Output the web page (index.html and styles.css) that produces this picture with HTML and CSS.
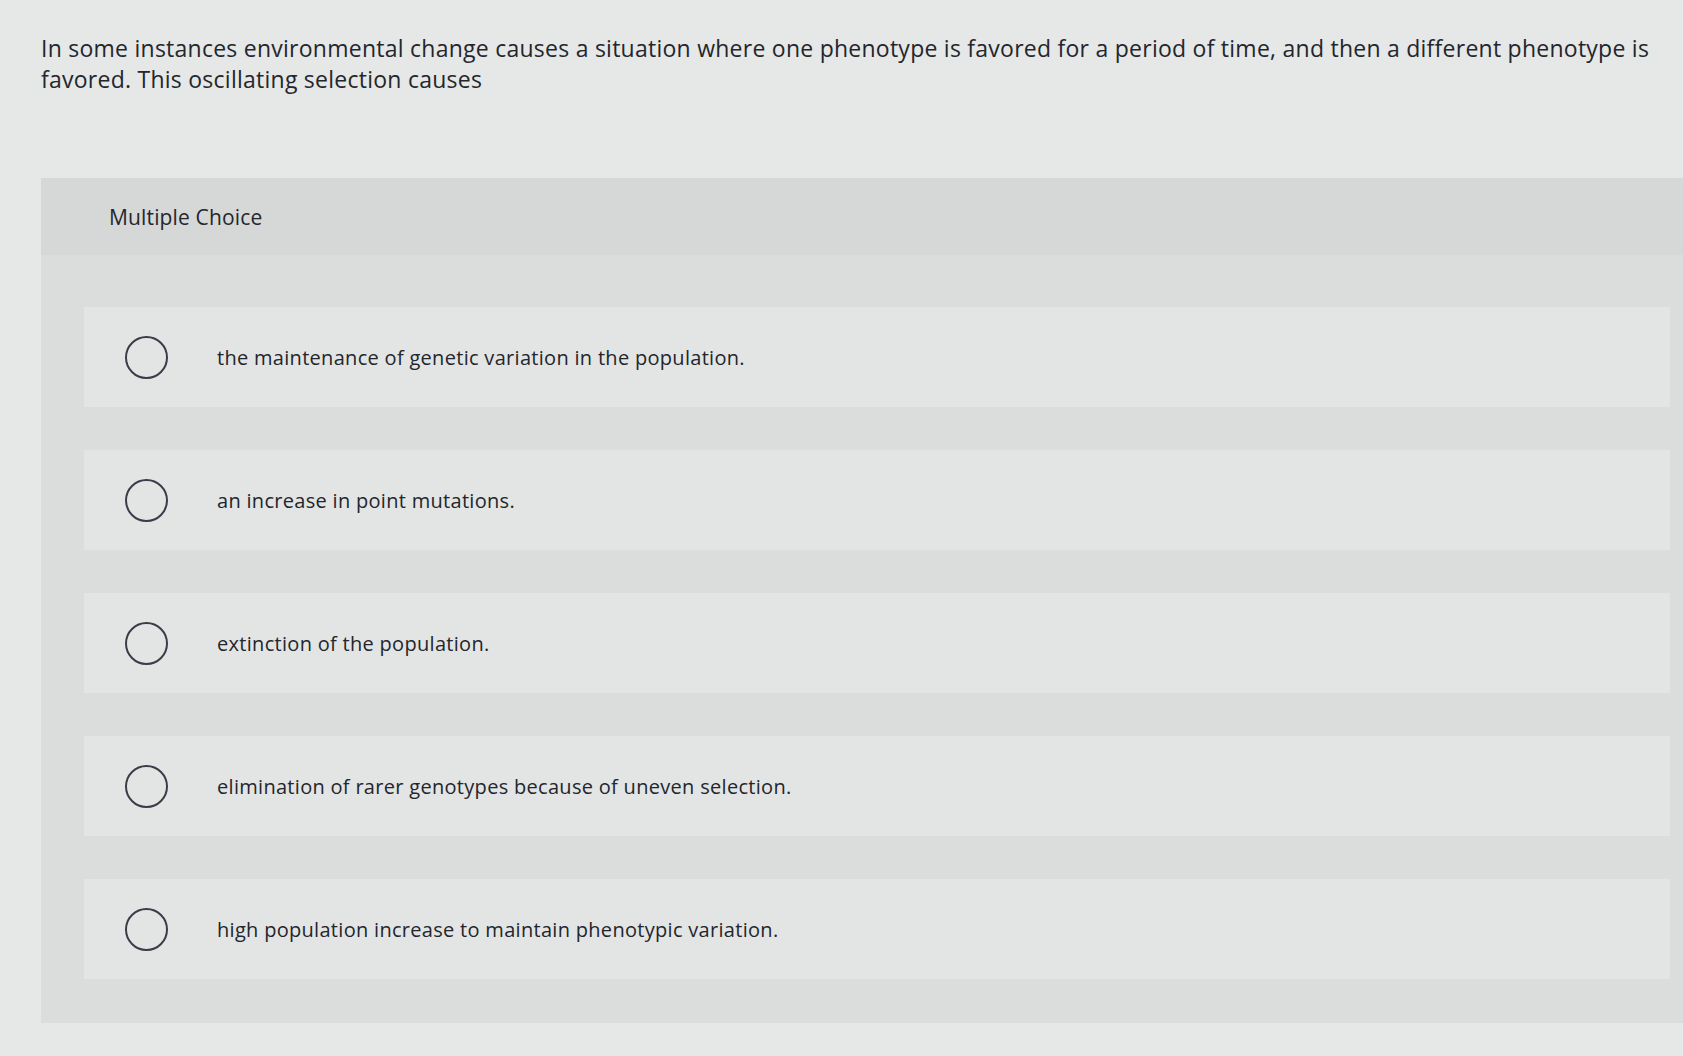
FILE: index.html
```html
<!DOCTYPE html>
<html lang="en">
<head>
<meta charset="utf-8">
<title>Multiple Choice</title>
<link rel="stylesheet" href="styles.css">
</head>
<body>
<main class="page">
  <p class="question">In some instances environmental change causes a situation where one phenotype is favored for a period of time, and then a different phenotype is favored. This oscillating selection causes</p>
  <section class="panel">
    <div class="panel-header">Multiple Choice</div>
    <div class="options">
      <label class="option"><span class="radio"></span><span class="option-text">the maintenance of genetic variation in the population.</span></label>
      <label class="option"><span class="radio"></span><span class="option-text">an increase in point mutations.</span></label>
      <label class="option"><span class="radio"></span><span class="option-text">extinction of the population.</span></label>
      <label class="option"><span class="radio"></span><span class="option-text">elimination of rarer genotypes because of uneven selection.</span></label>
      <label class="option"><span class="radio"></span><span class="option-text">high population increase to maintain phenotypic variation.</span></label>
    </div>
  </section>
</main>
</body>
</html>
```
FILE: styles.css
```css
html, body {
  margin: 0;
  padding: 0;
}
body {
  background: #e5e8e7;
  font-family: "Open Sans", Lato, "Liberation Sans", sans-serif;
  color: #24262d;
  width: 1683px;
  height: 1056px;
  overflow: hidden;
}
.page {
  display: flex;
  flex-direction: column;
}
.question {
  margin: 0;
  padding: 33px 20px 0 41px;
  font-size: 23px;
  line-height: 31px;
  letter-spacing: 0.25px;
}
.panel {
  margin: 83px 0 0 41px;
  background: #dadddc;
}
.panel-header {
  height: 77px;
  display: flex;
  align-items: center;
  padding-left: 68px;
  background: #d5d8d7;
  font-size: 21px;
  letter-spacing: 0.15px;
}
.options {
  display: flex;
  flex-direction: column;
  gap: 43px;
  padding: 52px 13px 44px 43px;
}
.option {
  height: 100px;
  display: flex;
  align-items: center;
  background: #e2e5e4;
  font-size: 20px;
  letter-spacing: 0.3px;
}
.radio {
  width: 43px;
  height: 43px;
  box-sizing: border-box;
  border: 2.5px solid #3a3d48;
  border-radius: 50%;
  margin-left: 41px;
  margin-right: 49px;
  flex: none;
}
```
